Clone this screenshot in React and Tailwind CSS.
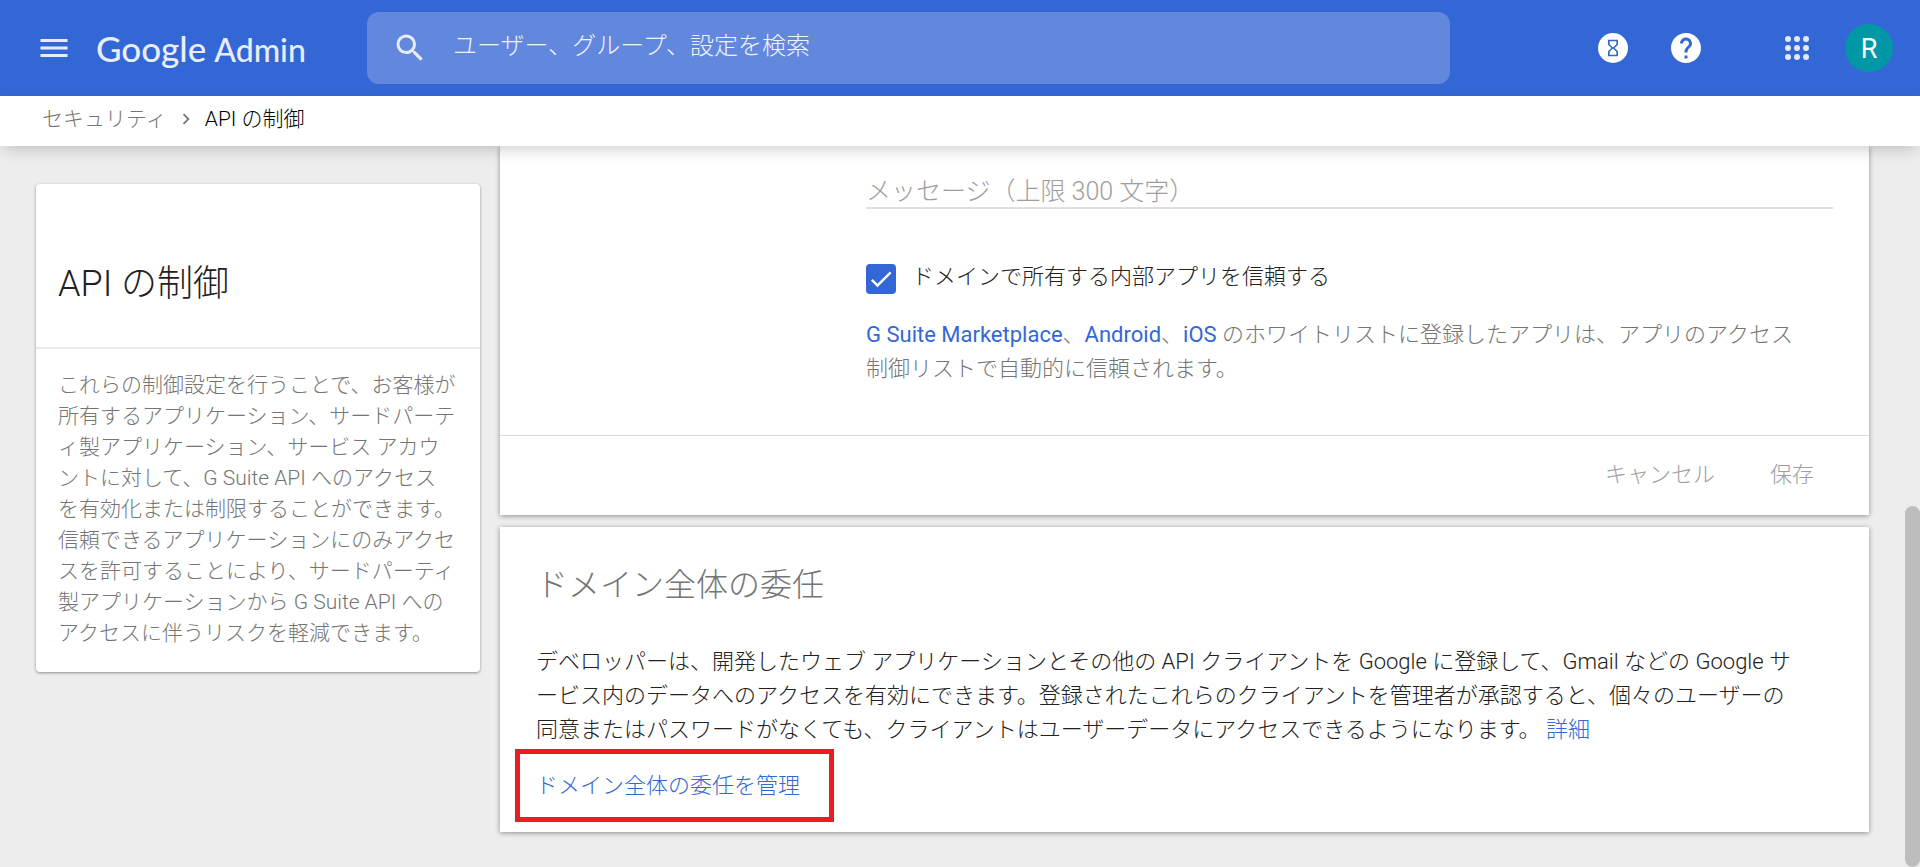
import { useState } from "react";
import { MdCheck, MdChevronRight, MdHelp, MdHourglassEmpty, MdMenu, MdSearch } from "react-icons/md";

const dots = [3, 12, 21]

const AppsIcon = () => (
  <svg width="24" height="24" viewBox="0 0 24 24" fill="#e3e9fa">
    {dots.map((y) => dots.map((x) => <circle key={x + "-" + y} cx={x} cy={y} r="3" />))}
  </svg>
)

const Header = () => {
  const [query, setQuery] = useState("")
  return (
    <header className="flex h-24 items-center bg-[#3367d6] pr-[27px] font-normal text-[#e8edfb]">
      <div className="flex w-[367px] shrink-0 items-center pl-9">
        <button aria-label="メニュー" className="mr-6">
          <MdMenu className="text-4xl" />
        </button>
        <a href="#" className="flex items-baseline gap-2 font-['Lato',sans-serif] font-medium">
          <span className="text-[35px]">Google</span>
          <span className="text-[32px]">Admin</span>
        </a>
      </div>
      <label className="flex h-[72px] flex-1 items-center rounded-xl bg-[#6288de] pl-[25px]">
        <MdSearch className="text-4xl" />
        <input
          type="text"
          aria-label="検索"
          value={query}
          onChange={(e) => setQuery(e.target.value)}
          placeholder="ユーザー、グループ、設定を検索"
          className="ml-[25px] h-9 flex-1 pb-1 text-[24px] outline-none placeholder:text-[#f1f4fd] placeholder:opacity-100"
        />
      </label>
      <div className="flex w-[443px] shrink-0 items-center justify-end">
        <button aria-label="タスク" className="mr-[25px] flex size-12 items-center justify-center">
          <span className="flex size-[30px] items-center justify-center rounded-full bg-white text-[20px] text-[#3367d6]">
            <MdHourglassEmpty />
          </span>
        </button>
        <button aria-label="ヘルプ" className="mr-[63px] flex size-12 items-center justify-center">
          <MdHelp className="text-4xl text-white" />
        </button>
        <button aria-label="アプリ" className="mr-6 flex size-12 items-center justify-center">
          <AppsIcon />
        </button>
        <button className="flex size-12 items-center justify-center rounded-full bg-[#0097a7] pt-[2px] text-[27px] leading-8 text-white">
          R
        </button>
      </div>
    </header>
  )
}

const Breadcrumb = () => (
  <nav className="relative z-10 flex h-[50px] items-center bg-white pb-1 pl-[42px] text-[21px] leading-[31px] shadow-[0_6px_16px_-4px_rgba(0,0,0,0.22)]">
    <a href="#" className="text-[#757575]">セキュリティ</a>
    <MdChevronRight className="mx-2 text-[22px] text-[#757575]" />
    <span className="text-black">API の制御</span>
  </nav>
)

const Sidebar = () => (
  <aside className="mt-[38px] w-[444px] shrink-0 rounded-sm bg-white shadow-[0_1px_3px_rgba(0,0,0,0.4)]">
    <h1 className="flex h-[165px] items-end border-b-2 border-[#ebebeb] px-[22px] pb-[36px] text-[36px] leading-[54px] text-[#212121]">
      API の制御
    </h1>
    <p className="px-[22px] pt-[21px] pb-[23px] text-[21px] leading-[31px] text-[#757575]">
      これらの制御設定を行うことで、お客様が<br />
      所有するアプリケーション、サードパーテ<br />
      ィ製アプリケーション、サービス アカウ<br />
      ントに対して、G Suite API へのアクセス<br />
      を有効化または制限することができます。<br />
      信頼できるアプリケーションにのみアクセ<br />
      スを許可することにより、サードパーティ<br />
      製アプリケーションから G Suite API への<br />
      アクセスに伴うリスクを軽減できます。
    </p>
  </aside>
)

const AppAccess = () => {
  const [trusted, setTrusted] = useState(true)
  const [message, setMessage] = useState("")
  return (
    <section className="bg-white shadow-[0_1px_5px_rgba(0,0,0,0.4)]">
      <div className="border-b border-[#dcdcdc] pt-[27px] pr-9 pb-[49px] pl-[366px]">
        <input
          type="text"
          aria-label="メッセージ"
          value={message}
          onChange={(e) => setMessage(e.target.value)}
          placeholder="メッセージ（上限 300 文字）"
          className="h-9 w-full border-b-2 border-[#e0e0e0] pt-1 text-[25px] outline-none placeholder:text-[#9e9e9e] placeholder:opacity-100"
        />
        <div className="mt-[53px] flex items-center gap-4">
          <span className="relative size-[30px]">
            <input
              id="trust"
              type="checkbox"
              checked={trusted}
              onChange={(e) => setTrusted(e.target.checked)}
              className="size-[30px] appearance-none rounded-sm border-2 border-[#3367d6] checked:bg-[#3367d6]"
            />
            {trusted && <MdCheck className="pointer-events-none absolute inset-0 m-auto text-[28px] text-white" />}
          </span>
          <label htmlFor="trust" className="pb-1 text-[22px] leading-[30px] text-[#212121]">
            ドメインで所有する内部アプリを信頼する
          </label>
        </div>
        <p className="mt-[22px] text-[22px] leading-[34px] text-[#757575]">
          <a href="#" className="font-normal text-[#3367d6]">G Suite Marketplace</a>、
          <a href="#" className="font-normal text-[#3367d6]">Android</a>、
          <a href="#" className="font-normal text-[#3367d6]">iOS</a> のホワイトリストに登録したアプリは、アプリのアクセス<br />
          制御リストで自動的に信頼されます。
        </p>
      </div>
      <div className="flex h-[79px] items-center justify-end gap-[55px] pr-[55px] pb-[2px] text-[22px] text-[#9e9e9e]">
        <button>キャンセル</button>
        <button>保存</button>
      </div>
    </section>
  )
}

const Delegation = () => (
  <section className="mt-3 bg-white pt-[34px] pb-[10px] shadow-[0_1px_5px_rgba(0,0,0,0.4)]">
    <h2 className="px-9 text-[32px] leading-[48px] text-[#757575]">ドメイン全体の委任</h2>
    <p className="mt-9 mb-[2px] px-9 text-[22px] leading-[34px] text-[#212121]">
      デベロッパーは、開発したウェブ アプリケーションとその他の API クライアントを Google に登録して、Gmail などの Google サ<br />
      ービス内のデータへのアクセスを有効にできます。登録されたこれらのクライアントを管理者が承認すると、個々のユーザーの<br />
      同意またはパスワードがなくても、クライアントはユーザーデータにアクセスできるようになります。{" "}
      <a href="#" className="text-[#3367d6]">詳細</a>
    </p>
    <a
      href="#"
      className="ml-[15px] flex h-[73px] w-[319px] items-center border-5 border-[#ed1c24] pl-4 text-[22px] text-[#3367d6]"
    >
      ドメイン全体の委任を管理
    </a>
  </section>
)

const App = () => {
  return (
    <div
      lang="ja"
      className="relative min-h-screen bg-[#ededed] font-['Roboto','Noto_Sans_CJK_JP_Light','Noto_Sans_CJK_JP',sans-serif] font-[350]"
    >
      <Header />
      <Breadcrumb />
      <div className="flex items-start gap-5 pr-[51px] pb-8 pl-9">
        <Sidebar />
        <main className="min-w-0 flex-1">
          <AppAccess />
          <Delegation />
        </main>
      </div>
      {/* scrollbar thumb */}
      <div className="absolute right-0 bottom-0 h-[361px] w-[15px] rounded-full bg-[#bdbdbd]" />
    </div>
  )
}

export default App
